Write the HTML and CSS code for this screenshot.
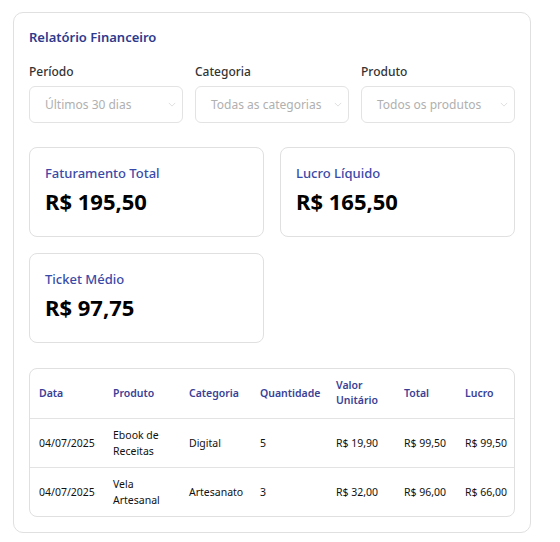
FILE: index.html
```html
<!DOCTYPE html>
<html lang="pt-BR">
<head>
<meta charset="utf-8">
<title>Relatório Financeiro</title>
<link rel="stylesheet" href="styles.css">
</head>
<body>
<div class="report">
  <h2 class="title">Relatório Financeiro</h2>
  <div class="filters">
    <div class="filter">
      <label class="filter-label">Período</label>
      <div class="select"><span>Últimos 30 dias</span><svg class="chev" viewBox="0 0 10 6" width="8" height="5"><path d="M1 1l4 4 4-4" fill="none" stroke="#d8d8d8" stroke-width="1"/></svg></div>
    </div>
    <div class="filter">
      <label class="filter-label">Categoria</label>
      <div class="select"><span>Todas as categorias</span><svg class="chev" viewBox="0 0 10 6" width="8" height="5"><path d="M1 1l4 4 4-4" fill="none" stroke="#d8d8d8" stroke-width="1"/></svg></div>
    </div>
    <div class="filter">
      <label class="filter-label">Produto</label>
      <div class="select"><span>Todos os produtos</span><svg class="chev" viewBox="0 0 10 6" width="8" height="5"><path d="M1 1l4 4 4-4" fill="none" stroke="#d8d8d8" stroke-width="1"/></svg></div>
    </div>
  </div>
  <div class="cards">
    <div class="card"><div class="card-label">Faturamento Total</div><div class="card-value">R$ 195,50</div></div>
    <div class="card"><div class="card-label">Lucro Líquido</div><div class="card-value">R$ 165,50</div></div>
    <div class="card"><div class="card-label">Ticket Médio</div><div class="card-value">R$ 97,75</div></div>
  </div>
  <div class="table-wrap">
    <table class="table">
      <colgroup><col class="c1"><col class="c2"><col class="c3"><col class="c4"><col class="c5"><col class="c6"><col class="c7"></colgroup>
      <thead>
        <tr><th>Data</th><th>Produto</th><th>Categoria</th><th>Quantidade</th><th>Valor Unitário</th><th>Total</th><th>Lucro</th></tr>
      </thead>
      <tbody>
        <tr><td>04/07/2025</td><td class="wrap">Ebook de Receitas</td><td>Digital</td><td>5</td><td>R$ 19,90</td><td>R$ 99,50</td><td>R$ 99,50</td></tr>
        <tr><td>04/07/2025</td><td class="wrap">Vela Artesanal</td><td>Artesanato</td><td>3</td><td>R$ 32,00</td><td>R$ 96,00</td><td>R$ 66,00</td></tr>
      </tbody>
    </table>
  </div>
</div>
</body>
</html>
```
FILE: styles.css
```css
* { box-sizing: border-box; }
body {
  margin: 0;
  padding: 12px 29px 10px 13px;
  background: #fff;
  font-family: "Noto Sans", "Open Sans", sans-serif;
  color: #111;
}
.report {
  width: 518px;
  border: 1px solid #e0e0e0;
  border-radius: 10px;
  padding: 15px 15px 15px 15px;
  display: flex;
  flex-direction: column;
}
.title {
  margin: -1px 0 0;
  font-size: 13px;
  font-weight: 600;
  color: #2e3a8c;
  line-height: 20px;
}
.filters {
  display: grid;
  grid-template-columns: repeat(3, 1fr);
  gap: 12px;
  margin-top: 16px;
}
.filter { display: flex; flex-direction: column; gap: 6px; }
.filter-label { font-size: 12px; color: #333; font-weight: 500; line-height: 17px; }
.select {
  height: 37px;
  border: 1px solid #e3e3e3;
  border-radius: 6px;
  display: flex;
  align-items: center;
  justify-content: space-between;
  padding: 0 6px 0 15px;
  font-size: 12px;
  color: #b0b0b0;
}
.chev { display: block; }
.cards {
  display: grid;
  grid-template-columns: repeat(2, 1fr);
  gap: 16px;
  margin-top: 24px;
}
.card {
  border: 1px solid #e0e0e0;
  border-radius: 8px;
  height: 90px;
  padding: 16px 15px;
}
.card-label { font-size: 13px; color: #3a4aa8; line-height: 18px; font-weight: 500; }
.card-value { font-size: 22px; font-weight: 700; color: #000; margin-top: 5px; line-height: 28px; }
.table-wrap {
  margin-top: 25px;
  border: 1px solid #e0e0e0;
  border-radius: 8px;
  overflow: hidden;
}
.table {
  width: 100%;
  border-collapse: collapse;
  table-layout: fixed;
  font-size: 10.5px;
}
.table th {
  text-align: left;
  font-weight: 600;
  color: #3a3f96;
  height: 49px;
  padding: 0 9px;
  line-height: 15px;
  border-bottom: 1px solid #e3e3e3;
}
.table td {
  height: 49px;
  padding: 0 9px;
  line-height: 16px;
  color: #111;
  white-space: nowrap;
}
.table td.wrap { white-space: normal; }
.table tbody tr + tr td { border-top: 1px solid #e3e3e3; }
.c1 { width: 74px; }
.c2 { width: 76px; }
.c3 { width: 71px; }
.c4 { width: 76px; }
.c5 { width: 68px; }
.c6 { width: 61px; }
.c7 { width: 58px; }
```
